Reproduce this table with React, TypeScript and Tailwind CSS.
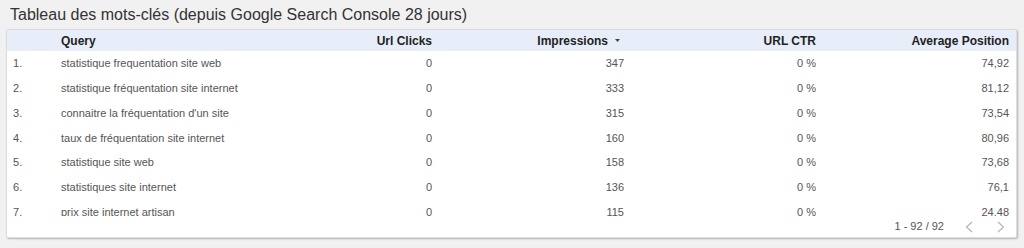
interface Row {
  query: string
  clicks: string
  impressions: string
  ctr: string
  position: string
}

const rows: Row[] = [
  { query: 'statistique frequentation site web', clicks: '0', impressions: '347', ctr: '0 %', position: '74,92' },
  { query: 'statistique fréquentation site internet', clicks: '0', impressions: '333', ctr: '0 %', position: '81,12' },
  { query: "connaitre la fréquentation d'un site", clicks: '0', impressions: '315', ctr: '0 %', position: '73,54' },
  { query: 'taux de fréquentation site internet', clicks: '0', impressions: '160', ctr: '0 %', position: '80,96' },
  { query: 'statistique site web', clicks: '0', impressions: '158', ctr: '0 %', position: '73,68' },
  { query: 'statistiques site internet', clicks: '0', impressions: '136', ctr: '0 %', position: '76,1' },
  { query: 'prix site internet artisan', clicks: '0', impressions: '115', ctr: '0 %', position: '24.48' },
]

const cols = 'grid grid-cols-[48px_193px_192px_192px_193px_191px]'

export default function App() {
  return (
    <div className="w-[1024px] h-[248px] bg-[#f1f1f1] font-['Liberation_Sans',Arial,sans-serif] overflow-hidden">
      <div className="pl-[10px] pt-[5px] h-[29px] text-[16px] leading-[20px] text-[#333333]">
        Tableau des mots-clés (depuis Google Search Console 28 jours)
      </div>

      <div className="ml-[6px] w-[1011px] h-[209px] bg-white border border-[#dcdcdc] rounded-[2px] shadow-[1px_1px_2px_rgba(0,0,0,0.25)] flex flex-col overflow-hidden">
        {/* header */}
        <div className={`${cols} h-[21px] bg-[#e8eef9] items-center text-[12px] font-bold text-[#222222]`}>
          <div />
          <div className="pl-[6px]">Query</div>
          <div className="text-right pr-[8px]">Url Clicks</div>
          <div className="flex justify-end items-center gap-[7px] pr-[12px]">
            <span>Impressions</span>
            <svg width="5" height="3" viewBox="0 0 5 3">
              <path d="M0 0h5L2.5 3z" fill="#444" />
            </svg>
          </div>
          <div className="text-right pr-[9px]">URL CTR</div>
          <div className="text-right pr-[7px]">Average Position</div>
        </div>

        {/* body, last row is cut by the pager like in the report */}
        <div className="h-[165px] overflow-hidden">
          {rows.map((r, i) => (
            <div key={i} className={`${cols} h-[24.8px] items-center text-[11px] text-[#555555]`}>
              <div className="pl-[6px]">{i + 1}.</div>
              <div className="pl-[6px] whitespace-nowrap">{r.query}</div>
              <div className="text-right pr-[8px]">{r.clicks}</div>
              <div className="text-right pr-[8px]">{r.impressions}</div>
              <div className="text-right pr-[9px]">{r.ctr}</div>
              <div className="text-right pr-[7px]">{r.position}</div>
            </div>
          ))}
        </div>

        {/* pagination */}
        <div className="flex-1 flex items-center justify-end pr-[11px] text-[11px] text-[#555555]">
          <span className="mr-[21px]">1 - 92 / 92</span>
          <svg width="8" height="12" viewBox="0 0 8 12" className="mr-[24px]">
            <path d="M7 1L1.5 6L7 11" fill="none" stroke="#b5b5b5" strokeWidth="1.2" />
          </svg>
          <svg width="8" height="12" viewBox="0 0 8 12">
            <path d="M1 1L6.5 6L1 11" fill="none" stroke="#b5b5b5" strokeWidth="1.2" />
          </svg>
        </div>
      </div>
    </div>
  )
}
